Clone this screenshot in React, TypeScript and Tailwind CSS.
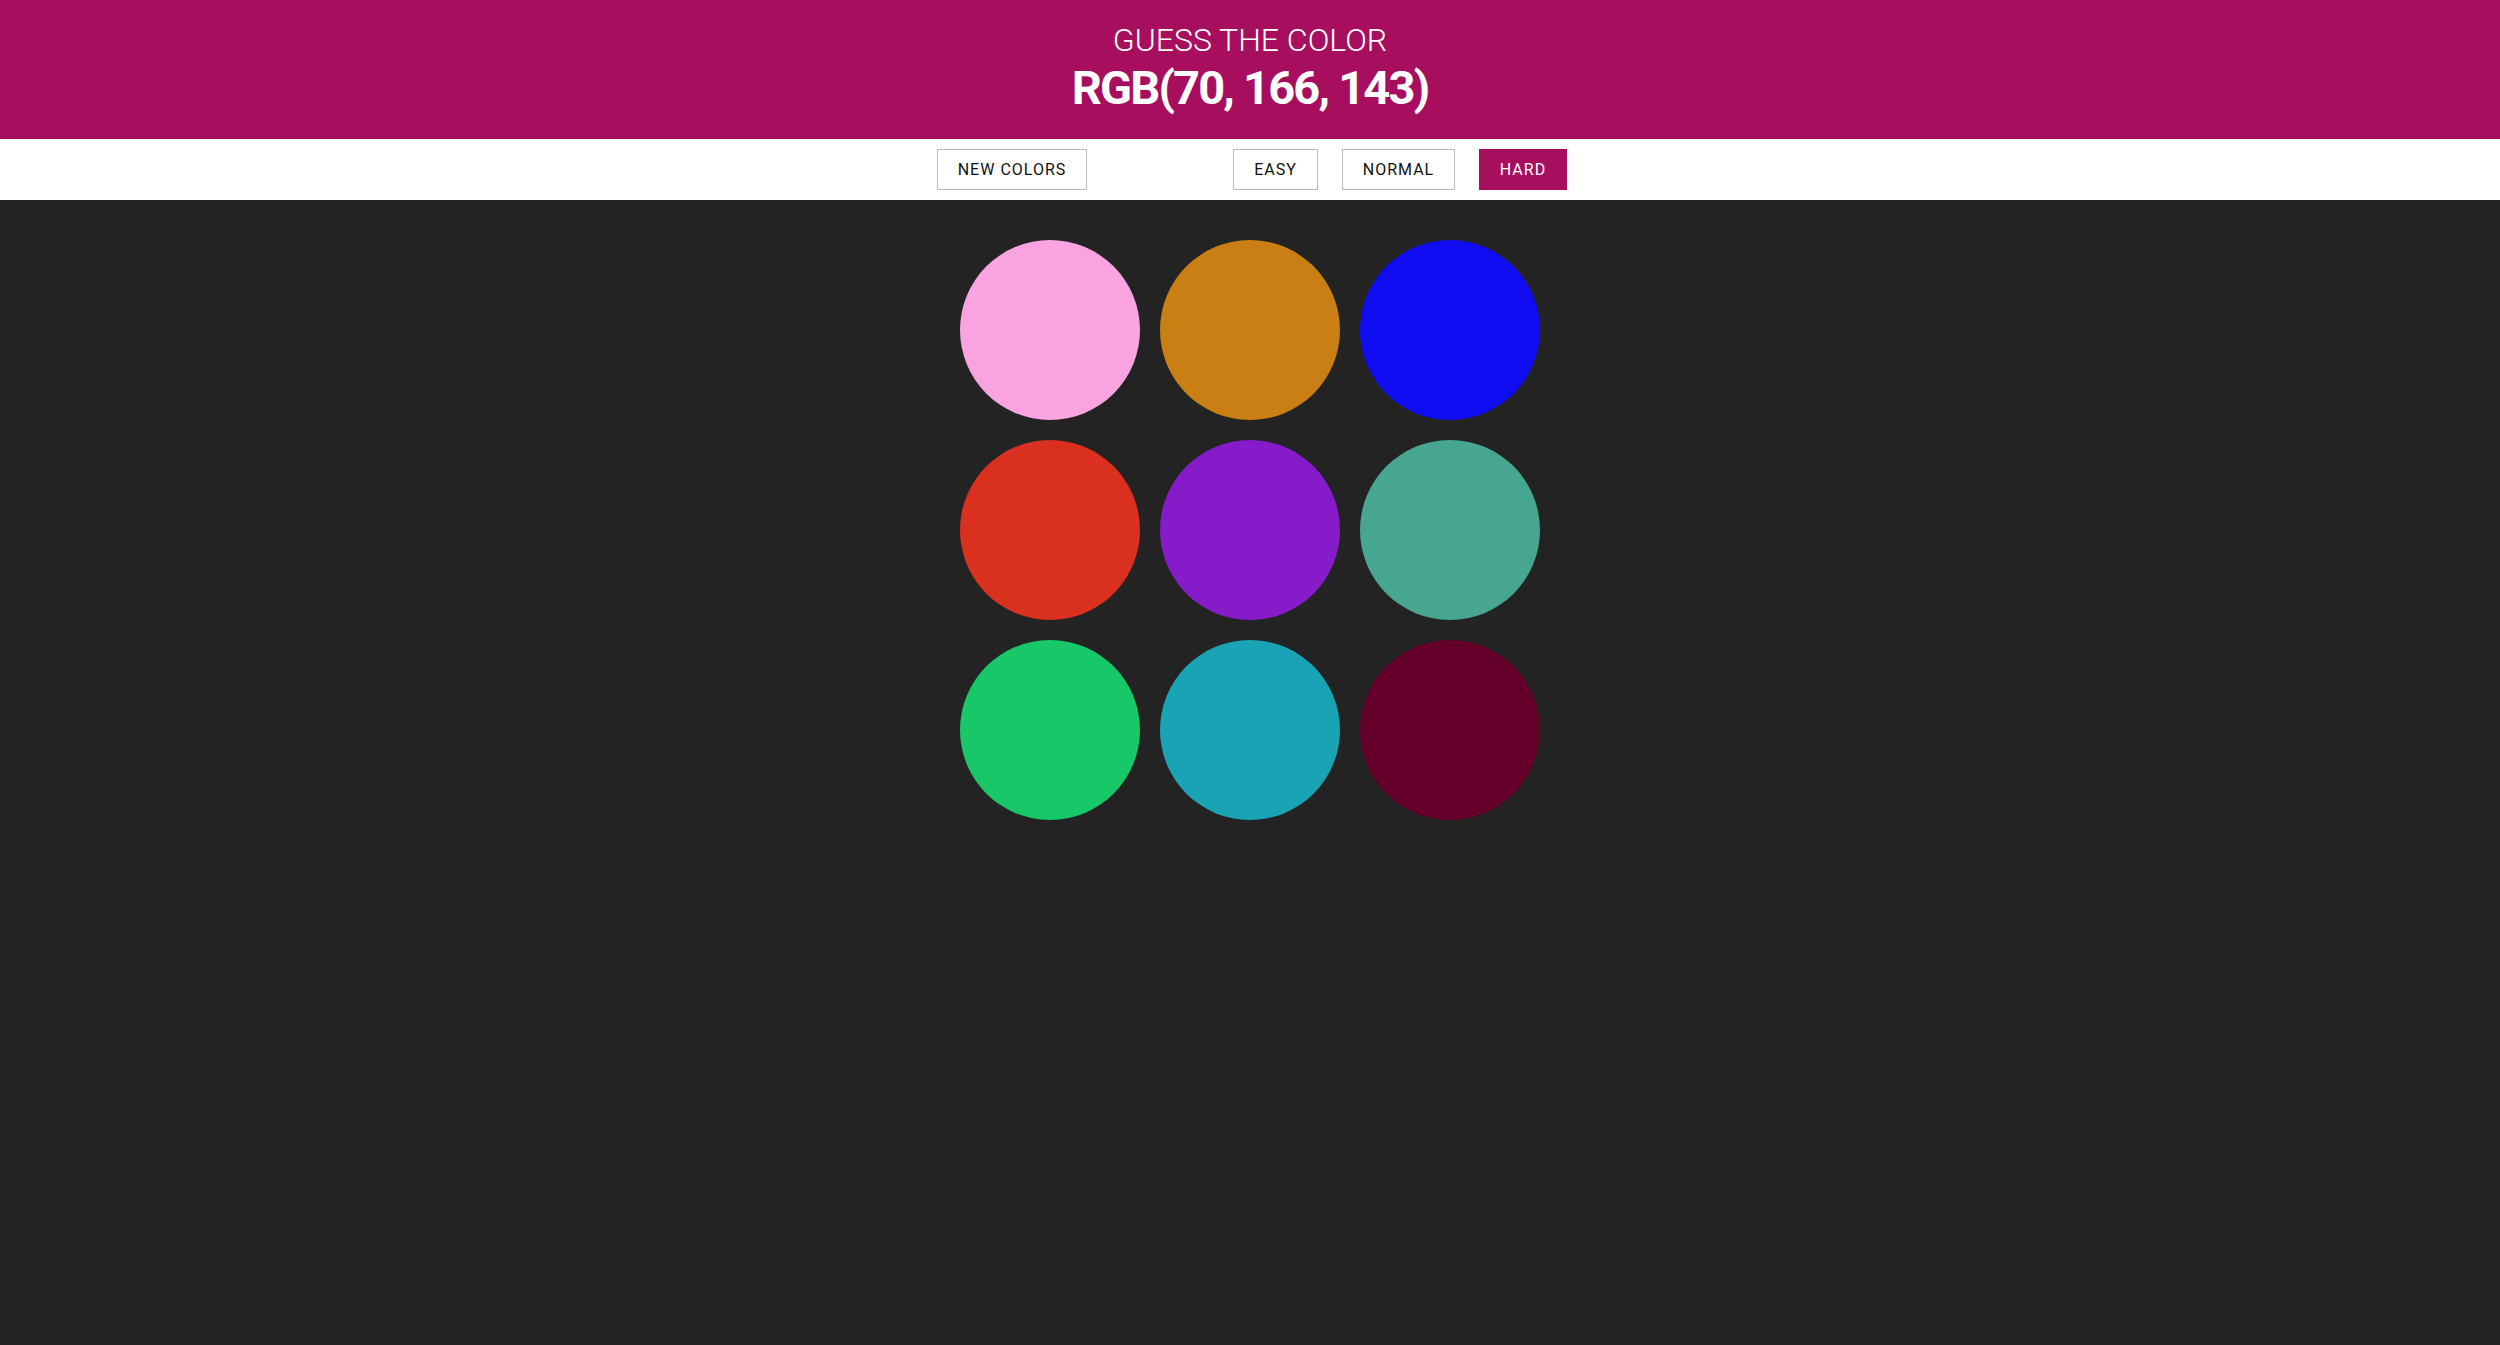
const colors = [
  "#f9a3e1",
  "#c97f13",
  "#100df2",
  "#d9301f",
  "#861bc9",
  "#47a68f",
  "#18c868",
  "#1aa3b5",
  "#64002a",
];

const App = () => {
  return (
    <div className="min-h-screen bg-[#232323] font-['Roboto',sans-serif]">
      {/* header */}
      <div className="h-[139px] bg-[#a70e5e] text-white text-center flex flex-col items-center pt-[21px]">
        <h1 className="text-[32px] leading-[38px] font-light uppercase">Guess the color</h1>
        <div className="text-[47px] leading-[58px] font-bold tracking-[-1.8px]">RGB(70, 166, 143)</div>
      </div>

      {/* toolbar */}
      <div className="h-[61px] bg-white flex items-center justify-center pl-[4px]">
        <div className="w-[630px] flex justify-between">
          <button className="h-[41px] w-[150px] border border-[#bbb] bg-white text-[16px] tracking-[1px] uppercase text-[#111]">
            New Colors
          </button>
          <div className="flex gap-[24px]">
            <button className="h-[41px] w-[85px] border border-[#bbb] bg-white text-[16px] tracking-[1px] uppercase text-[#111]">
              Easy
            </button>
            <button className="h-[41px] w-[113px] border border-[#bbb] bg-white text-[16px] tracking-[1px] uppercase text-[#111]">
              Normal
            </button>
            <button className="h-[41px] w-[88px] bg-[#a70e5e] text-[16px] tracking-[1px] uppercase text-white">
              Hard
            </button>
          </div>
        </div>
      </div>

      {/* circles */}
      <div className="w-[600px] mx-auto pt-[30px] grid grid-cols-3">
        {colors.map((c) => (
          <div key={c} className="p-[10px]">
            <div className="w-[180px] h-[180px] rounded-full" style={{ backgroundColor: c }} />
          </div>
        ))}
      </div>
    </div>
  );
};

export default App;
